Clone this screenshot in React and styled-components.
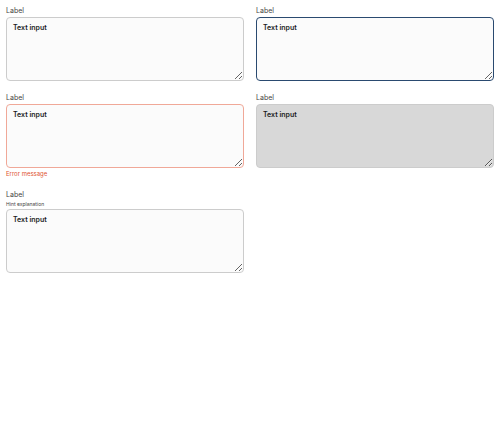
import React from "react";
import styled, { createGlobalStyle, css } from "styled-components";

const GlobalStyle = createGlobalStyle`
  body {
    margin: 0;
    background: #ffffff;
    font-family: Inter, "Noto Sans", sans-serif;
  }
`;

const Page = styled.div`
  display: grid;
  grid-template-columns: repeat(2, 1fr);
  column-gap: 12px;
  row-gap: 12px;
  padding: 6px;
  align-items: start;
`;

const Field = styled.div`
  display: flex;
  flex-direction: column;
`;

const Label = styled.label`
  font-size: 7px;
  line-height: 9px;
  color: #444444;
  margin-bottom: 2px;
`;

const Hint = styled.span`
  font-size: 5px;
  line-height: 7px;
  color: #444444;
  margin: 0 0 1px;
`;

const Area = styled.textarea`
  box-sizing: border-box;
  width: 100%;
  height: 64px;
  margin: 0;
  padding: 5px 6px;
  border-radius: 4px;
  border: 1px solid #cccccc;
  background: #fbfbfb;
  font-family: Inter, "Noto Sans", sans-serif;
  font-size: 7px;
  font-weight: 600;
  line-height: 9px;
  color: #1a1a1a;
  outline: none;
  resize: vertical;

  ${(p) =>
    p.$state === "focus" &&
    css`
      border: 1.5px solid #2a4a70;
    `}
  ${(p) =>
    p.$state === "error" &&
    css`
      border: 1px solid #f0a898;
    `}
  ${(p) =>
    p.$state === "disabled" &&
    css`
      background: #d8d8d8;
      border: 1px solid #cccccc;
      color: #1a1a1a;
      -webkit-text-fill-color: #1a1a1a;
    `}
`;

const ErrorText = styled.span`
  font-size: 6px;
  line-height: 8px;
  color: #e0522f;
  margin-top: 2px;
`;

const TextField = ({ state, hint, error }) => (
  <Field>
    <Label>Label</Label>
    {hint && <Hint>{hint}</Hint>}
    <Area
      $state={state}
      defaultValue="Text input"
      disabled={state === "disabled"}
      readOnly
    />
    {error && <ErrorText>{error}</ErrorText>}
  </Field>
);

export default function App() {
  return (
    <>
      <GlobalStyle />
      <Page>
        <TextField />
        <TextField state="focus" />
        <TextField state="error" error="Error message" />
        <TextField state="disabled" />
        <TextField hint="Hint explanation" />
      </Page>
    </>
  );
}
